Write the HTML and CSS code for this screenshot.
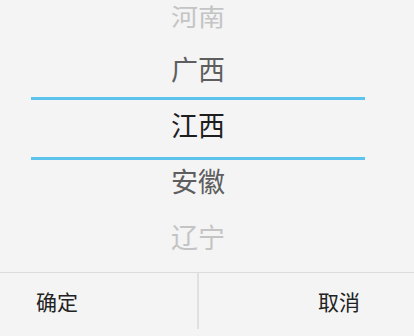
FILE: index.html
```html
<!DOCTYPE html>
<html lang="zh-CN">
<head>
<meta charset="utf-8">
<title>省份选择</title>
<link rel="stylesheet" href="styles.css">
</head>
<body>
<div class="dialog">
  <div class="picker">
    <ul class="wheel">
      <li class="item far top">河南</li>
      <li class="item near">广西</li>
      <li class="item current">江西</li>
      <li class="item near">安徽</li>
      <li class="item far">辽宁</li>
    </ul>
    <div class="selection"></div>
  </div>
  <div class="actions">
    <button class="btn btn-ok">确定</button>
    <button class="btn btn-cancel">取消</button>
  </div>
</div>
</body>
</html>
```
FILE: styles.css
```css
html, body {
  margin: 0;
  padding: 0;
  background: #f4f4f4;
}
body {
  width: 414px;
  height: 336px;
  overflow: hidden;
  font-family: "Noto Sans CJK SC", "Noto Sans", sans-serif;
}
.dialog {
  display: flex;
  flex-direction: column;
  height: 336px;
}
.picker {
  position: relative;
  height: 272px;
  overflow: hidden;
  border-bottom: 1px solid #dcdcdc;
}
.wheel {
  list-style: none;
  margin: -16px 49px 0 31px;
  padding: 0;
  display: flex;
  flex-direction: column;
}
.item {
  height: 56px;
  display: flex;
  align-items: center;
  justify-content: center;
  font-size: 27px;
  line-height: 1;
  box-sizing: border-box;
}
.far { color: #c4c4c4; }
.near { color: #5e5e5e; }
.current { color: #1e1e1e; }
.top {
  transform: scaleY(0.88);
  transform-origin: 50% 100%;
}
.selection {
  position: absolute;
  left: 31px;
  right: 49px;
  top: 97px;
  height: 57px;
  border-top: 3px solid #5cc4ec;
  border-bottom: 3px solid #5cc4ec;
  pointer-events: none;
}
.actions {
  display: flex;
  height: 63px;
  padding-bottom: 7px;
  box-sizing: border-box;
}
.btn {
  flex: 1;
  border: none;
  background: transparent;
  font-family: "Noto Sans CJK SC", "Noto Sans", sans-serif;
  font-size: 21px;
  color: #222;
  padding: 0;
  display: flex;
  align-items: center;
}
.btn-ok {
  flex: 0 0 199px;
  padding-left: 36px;
  border-right: 2px solid #e0e0e0;
  justify-content: flex-start;
}
.btn-cancel {
  justify-content: flex-end;
  padding-right: 54px;
}
```
